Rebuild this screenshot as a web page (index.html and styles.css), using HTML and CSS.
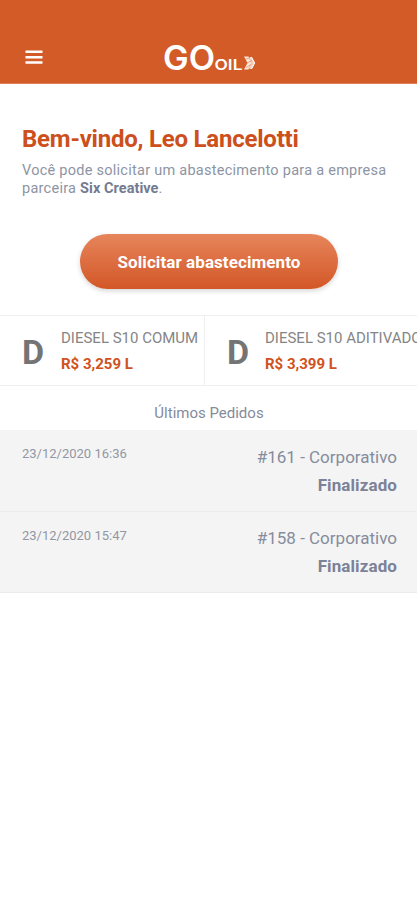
FILE: index.html
```html
<!DOCTYPE html>
<html lang="pt-BR">
<head>
<meta charset="utf-8">
<title>GO OIL</title>
<link rel="stylesheet" href="styles.css">
</head>
<body>
<header class="topbar">
  <svg class="menu" width="18" height="14" viewBox="0 0 18 14"><path d="M.5 1.700h17M.5 7.200h17M.5 12.500h17" stroke="#fff" stroke-width="2.500"/></svg>
  <svg class="logo" width="94" height="30" viewBox="0 0 94 30">
    <text class="logo-go" x="-1" y="27" textLength="52" lengthAdjust="spacingAndGlyphs">GO</text>
    <text class="logo-oil" x="50.500" y="26.800" textLength="28" lengthAdjust="spacingAndGlyphs">OIL</text>
    <path d="M80 13.500h4.500l3.500 6.500-3.500 6.500h-4.500l3.500-6.500z" fill="#fbe6da"/>
    <path d="M86 14h2l3.200 6-3.200 6h-2l3-6z" fill="#fff"/>
    <path d="M84 14.500h3l3 5.500-3 5.500h-3l3-5.500z" fill="#f3c9b5"/>
    <path d="M81 16.500l5-2M82 20.500l6-3M82 24.500l5-3" stroke="#dc7a4e" stroke-width=".6"/>
  </svg>
</header>
<main>
  <section class="welcome">
    <h1>Bem-vindo, Leo Lancelotti</h1>
    <p>Você pode solicitar um abastecimento para a empresa parceira <strong>Six Creative</strong>.</p>
    <button class="request">Solicitar abastecimento</button>
  </section>
  <section class="fuels">
    <div class="fuel"><b class="mark">D</b><div><div class="name">DIESEL S10 COMUM</div><div class="price">R$ 3,259 L</div></div></div>
    <div class="fuel"><b class="mark">D</b><div><div class="name">DIESEL S10 ADITIVADO</div><div class="price">R$ 3,399 L</div></div></div>
  </section>
  <h2>Últimos Pedidos</h2>
  <section class="orders">
    <div class="order"><time>23/12/2020 16:36</time><div class="info"><div>#161 - Corporativo</div><strong>Finalizado</strong></div></div>
    <div class="order"><time>23/12/2020 15:47</time><div class="info"><div>#158 - Corporativo</div><strong>Finalizado</strong></div></div>
  </section>
</main>
</body>
</html>
```
FILE: styles.css
```css
* { box-sizing: border-box; }
body {
  margin: 0;
  min-height: 900px;
  overflow-x: hidden;
  background: #fff;
  color: #858c9d;
  font-family: Roboto, sans-serif;
}
.topbar {
  display: grid;
  grid-template-columns: 139px 94px;
  align-items: end;
  height: 84px;
  padding: 0 0 10px 25px;
  background: #d35b28;
  border-bottom: 1px solid #dd8057;
}
.menu { margin-bottom: 9px; }
.logo { display: block; overflow: visible; }
.logo text { fill: #fff; font-family: Inter, sans-serif; }
.logo-go { font-size: 33.5px; font-weight: 600; }
.logo-oil { font-size: 14.5px; font-weight: 600; }
.welcome { height: 231px; padding: 40px 22px 0; }
h1 {
  margin: 0;
  color: #cc4f1c;
  font-size: 24px;
  font-weight: 700;
  line-height: 30px;
  letter-spacing: -.22px;
  white-space: nowrap;
}
.welcome p {
  margin: 8px 0 0;
  font-size: 14.5px;
  line-height: 18px;
  letter-spacing: .26px;
  color: #8e94a3;
}
.welcome strong { color: #747b91; font-weight: 700; letter-spacing: .05px; }
.request {
  display: block;
  width: 258px;
  height: 55px;
  margin: 36px auto 0 58px;
  padding: 1px 0 0;
  border: 0;
  border-radius: 28px;
  background: linear-gradient(#e6855b, #d35727);
  box-shadow: 0 2px 5px rgba(0, 0, 0, .17);
  color: #fff;
  font: 700 17px/54px Roboto, sans-serif;
  letter-spacing: .08px;
}
.fuels {
  display: flex;
  height: 71px;
  overflow: hidden;
  border: solid #efefef;
  border-width: 1px 0;
}
.fuel {
  display: grid;
  flex: none;
  grid-template-columns: 39px auto;
  align-items: center;
  width: 205px;
  padding-left: 22px;
  border-right: 1px solid #efefef;
  white-space: nowrap;
}
.fuel + .fuel { width: 230px; grid-template-columns: 38px auto; }
.mark { padding-top: 2px; color: #747474; font-size: 34px; line-height: 40px; }
.name { color: #858585; font-size: 15px; line-height: 26px; }
.price { color: #cf5220; font-size: 15px; font-weight: 700; line-height: 26px; }
h2 {
  margin: 0;
  height: 44px;
  padding: 17px 0 0 1px;
  font-size: 15px;
  font-weight: 400;
  line-height: 20px;
  text-align: center;
  color: #858b9a;
}
.order {
  display: flex;
  justify-content: space-between;
  height: 82px;
  padding: 13px 20px 0 22px;
  background: #f4f4f4;
  border-bottom: 1px solid #ececec;
}
.order + .order { height: 81px; padding-top: 12px; }
time { font-size: 13px; line-height: 22px; color: #9297a3; }
.order + .order time { line-height: 24px; }
.info { font-size: 17px; line-height: 28px; text-align: right; }
.info strong { color: #7c8297; letter-spacing: .1px; }
```
